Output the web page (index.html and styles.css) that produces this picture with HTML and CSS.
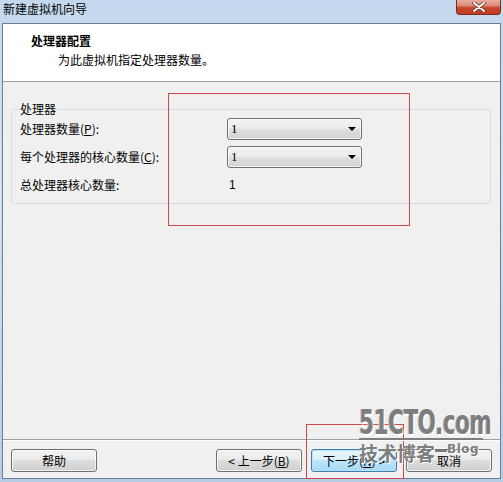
FILE: index.html
```html
<!DOCTYPE html>
<html lang="zh-CN">
<head>
<meta charset="utf-8">
<title>新建虚拟机向导</title>
<link rel="stylesheet" href="styles.css">
</head>
<body>
<div class="window">
  <div class="titlebar">
    <span class="title-text">新建虚拟机向导</span>
    <div class="close-btn">
      <svg width="14" height="10" viewBox="0 0 14 10">
        <path d="M2 1 L12 9 M12 1 L2 9" stroke="#5a2a22" stroke-width="3.4" stroke-linecap="round"/>
        <path d="M2 1 L12 9 M12 1 L2 9" stroke="#ffffff" stroke-width="2" stroke-linecap="round"/>
      </svg>
    </div>
  </div>
  <div class="client">
    <div class="header">
      <div class="header-title">处理器配置</div>
      <div class="header-sub">为此虚拟机指定处理器数量。</div>
    </div>
    <div class="body">
      <fieldset class="group">
        <legend class="group-title">处理器</legend>
        <div class="rows">
          <div class="row">
            <span class="label">处理器数量(<u>P</u>):</span>
            <div class="combo"><span class="combo-value">1</span><span class="combo-arrow"></span></div>
          </div>
          <div class="row">
            <span class="label">每个处理器的核心数量(<u>C</u>):</span>
            <div class="combo"><span class="combo-value">1</span><span class="combo-arrow"></span></div>
          </div>
          <div class="row">
            <span class="label">总处理器核心数量:</span>
            <span class="value">1</span>
          </div>
        </div>
      </fieldset>
    </div>
    <div class="footer">
      <button class="btn">帮助</button>
      <div class="spacer"></div>
      <button class="btn">&lt; 上一步(<u>B</u>)</button>
      <button class="btn btn-default">下一步(<u>N</u>) &gt;</button>
      <button class="btn">取消</button>
    </div>
  </div>
  <div class="mark mark-top"></div>
  <div class="mark mark-bottom"></div>
  <div class="watermark">
    <div class="wm-logo"><span class="wm-logo-text">51CTO.com</span></div>
    <div class="wm-line"></div>
    <div class="wm-sub"><span class="wm-cn">技术博客</span><span class="wm-dash"></span><span class="wm-blog">Blog</span></div>
  </div>
</div>
</body>
</html>
```
FILE: styles.css
```css
html, body {
  margin: 0;
  padding: 0;
}
body {
  width: 503px;
  height: 482px;
  overflow: hidden;
  font-family: "Noto Sans CJK SC", "Liberation Sans", sans-serif;
  font-size: 12px;
  color: #000;
}
.window {
  position: relative;
  box-sizing: border-box;
  width: 503px;
  height: 482px;
  overflow: hidden;
  padding: 0 2px 3px 2px;
  display: flex;
  flex-direction: column;
  background: linear-gradient(to bottom, #c3d8ee 0%, #d2e2f3 40%, #b6cde6 100%);
}
.titlebar {
  height: 23px;
  flex: none;
  display: flex;
  align-items: flex-start;
  justify-content: space-between;
  padding-left: 1px;
}
.title-text {
  line-height: 14px;
  margin-top: 2px;
  font-size: 12px;
  color: #000;
}
.close-btn {
  width: 45px;
  height: 15px;
  box-sizing: border-box;
  border: 1px solid #7d2b1f;
  border-top: none;
  border-radius: 0 0 4px 4px;
  background: linear-gradient(to bottom, #e9ac9f 0%, #dc8a78 40%, #c7452e 55%, #c23d22 100%);
  display: flex;
  align-items: center;
  justify-content: center;
}
.client {
  flex: 1;
  display: flex;
  flex-direction: column;
  border: 1px solid #6a7f96;
  background: #f0f0f0;
  min-height: 0;
}
.header {
  height: 57px;
  flex: none;
  background: #fff;
  border-bottom: 1px solid #a0a0a0;
  box-sizing: content-box;
  padding: 0 0 0 28px;
}
.header-title {
  font-weight: bold;
  line-height: 14px;
  margin-top: 10px;
}
.header-sub {
  line-height: 14px;
  margin-top: 5px;
  padding-left: 27px;
}
.body {
  flex: 1;
  padding-top: 20px;
}
.group {
  margin: 0 9px 0 8px;
  padding: 2px 8px 7px 8px;
  border: 1px solid #d5dfe5;
  border-radius: 3px;
  min-width: 0;
}
.group-title {
  padding: 0;
  line-height: 14px;
  margin-left: 0;
}
.rows {
  display: flex;
  flex-direction: column;
  gap: 6px;
}
.row {
  display: grid;
  grid-template-columns: 207px 135px;
  align-items: center;
  height: 22px;
}
.label {
  line-height: 14px;
}
.value {
  padding-left: 2px;
  font-family: "Liberation Sans", sans-serif;
}
.combo {
  box-sizing: border-box;
  width: 135px;
  height: 22px;
  border: 1px solid #707070;
  border-radius: 3px;
  background: linear-gradient(to bottom, #f3f3f3 0%, #ececec 45%, #dedede 55%, #d2d2d2 100%);
  display: flex;
  align-items: center;
  justify-content: space-between;
  padding: 0 5px 0 3px;
  box-shadow: inset 0 0 0 1px rgba(255,255,255,0.7);
}
.combo-value {
  font-family: "Liberation Serif", serif;
  font-size: 13px;
}
.combo-arrow {
  width: 0;
  height: 0;
  border-left: 4px solid transparent;
  border-right: 4px solid transparent;
  border-top: 4px solid #000;
}
.footer {
  flex: none;
  height: 29px;
  border-top: 1px solid #a0a0a0;
  box-shadow: inset 0 1px 0 #fff;
  padding: 9px 8px 0 8px;
  display: flex;
  align-items: flex-start;
  gap: 9px;
}
.spacer {
  flex: 1;
}
.btn {
  box-sizing: border-box;
  width: 86px;
  height: 23px;
  border: 1px solid #707070;
  border-radius: 3px;
  background: linear-gradient(to bottom, #f2f2f2 0%, #ebebeb 45%, #dddddd 50%, #cfcfcf 100%);
  box-shadow: inset 0 0 0 1px rgba(255,255,255,0.75);
  font-family: "Noto Sans CJK SC", "Liberation Sans", sans-serif;
  font-size: 12px;
  line-height: 14px;
  color: #000;
  padding: 0;
}
.btn-default {
  border-color: #3c7fb1;
  background: linear-gradient(to bottom, #eaf6fd 0%, #d9f0fc 45%, #bee6fd 50%, #a7d9f5 100%);
  box-shadow: inset 0 0 0 1px #b8e0f8;
}
.mark {
  position: absolute;
  border: 1px solid #d04a4a;
  pointer-events: none;
}
.mark-top {
  left: 168px;
  top: 93px;
  width: 240px;
  height: 131px;
}
.mark-bottom {
  left: 306px;
  top: 424px;
  width: 96px;
  height: 53px;
}
.watermark {
  position: absolute;
  left: 359px;
  top: 406px;
  width: 126px;
  pointer-events: none;
  color: #7e7e7e;
}
.wm-logo {
  height: 32px;
}
.wm-logo-text {
  display: inline-block;
  font-family: "DejaVu Sans Condensed", "DejaVu Sans", sans-serif;
  font-weight: bold;
  font-size: 24px;
  line-height: 24px;
  letter-spacing: -0.5px;
  transform: scale(1, 1.42);
  transform-origin: left top;
  text-shadow: 1px 1px 0 #fff, -1px 0 0 #c8c8c8;
  white-space: nowrap;
}
.wm-line {
  height: 2px;
  margin-right: 2px;
  background: #7e7e7e;
  box-shadow: 0 1px 0 #fff;
}
.wm-sub {
  display: flex;
  align-items: flex-start;
  margin-top: 3px;
}
.wm-cn {
  font-family: "Noto Sans CJK SC", sans-serif;
  font-weight: bold;
  font-size: 19px;
  line-height: 20px;
  text-shadow: 1px 1px 0 #fff;
}
.wm-dash {
  width: 12px;
  height: 2px;
  background: #7e7e7e;
  margin-top: 7px;
}
.wm-blog {
  font-family: "DejaVu Sans", sans-serif;
  font-weight: bold;
  font-size: 12px;
  line-height: 12px;
  letter-spacing: 0.5px;
  text-shadow: 1px 1px 0 #fff;
}
```
